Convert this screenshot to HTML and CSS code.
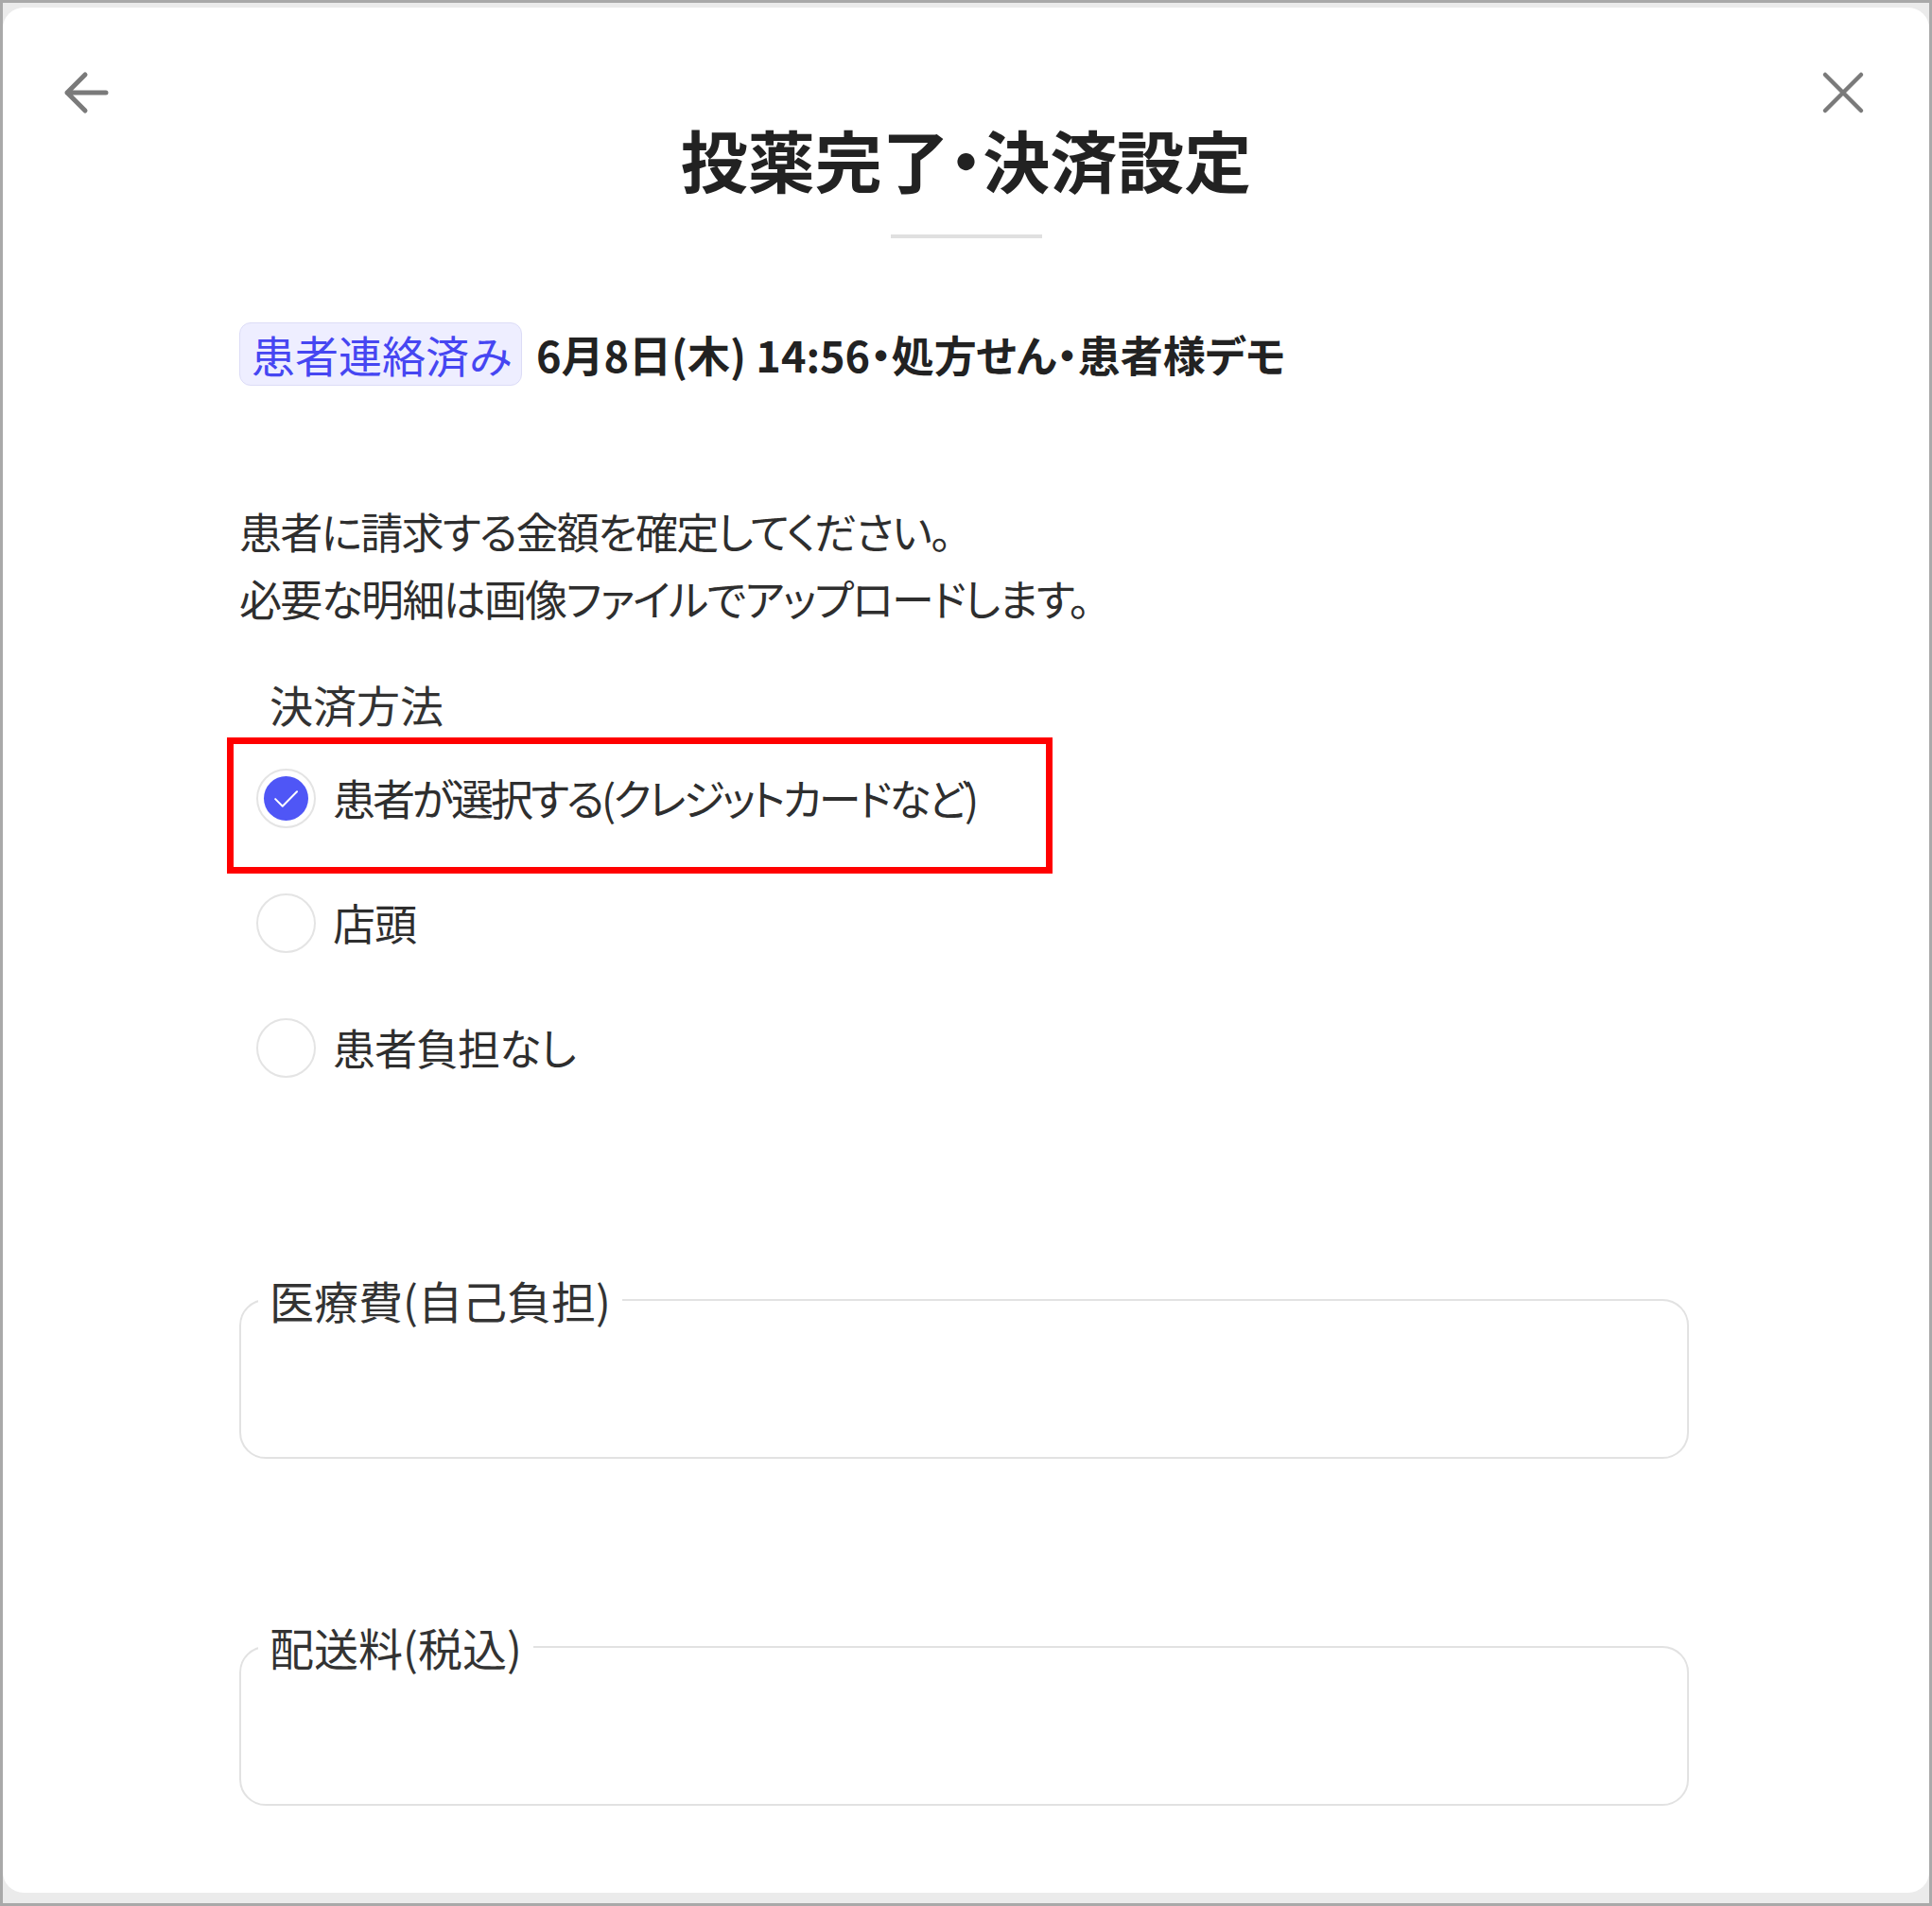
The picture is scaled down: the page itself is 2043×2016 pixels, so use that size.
FILE: index.html
```html
<!DOCTYPE html>
<html lang="ja">
<head>
<meta charset="utf-8">
<title>投薬完了・決済設定</title>
<link rel="stylesheet" href="styles.css">
</head>
<body>
<div class="card">
  <div class="topbar">
    <button class="icon-btn" aria-label="戻る">
      <svg width="48" height="48" viewBox="0 0 48 48"><path d="M45 24 H4 M23 5 L4 24 L23 43" fill="none" stroke="#7a7a7a" stroke-width="5" stroke-linecap="round" stroke-linejoin="round"/></svg>
    </button>
    <button class="icon-btn" aria-label="閉じる">
      <svg width="48" height="48" viewBox="0 0 48 48"><path d="M5 5 L43 43 M43 5 L5 43" fill="none" stroke="#7a7a7a" stroke-width="4.5" stroke-linecap="round"/></svg>
    </button>
  </div>
  <h1 class="title">投薬完了・決済設定</h1>
  <div class="title-rule"></div>
  <div class="content">
    <div class="meta">
      <span class="badge">患者連絡済み</span>
      <span class="meta-text">6月8日(木) 14:56・処方せん・患者様デモ</span>
    </div>
    <p class="desc">患者に請求する金額を確定してください。<br>必要な明細は画像ファイルでアップロードします。</p>
    <div class="group-label">決済方法</div>
    <div class="options">
      <label class="option option-highlight">
        <span class="radio checked"><span class="radio-dot"><svg width="47" height="47" viewBox="0 0 24 24"><path d="M6.2 12.3 L10.1 16.2 L17.9 8.3" fill="none" stroke="#fff" stroke-width="1" stroke-linecap="round" stroke-linejoin="round"/></svg></span></span>
        <span class="option-text option-text-long">患者が選択する(クレジットカードなど)</span>
      </label>
      <label class="option">
        <span class="radio"></span>
        <span class="option-text">店頭</span>
      </label>
      <label class="option">
        <span class="radio"></span>
        <span class="option-text">患者負担なし</span>
      </label>
    </div>
    <fieldset class="field field-first">
      <legend>医療費(自己負担)</legend>
      <div class="field-body"></div>
    </fieldset>
    <fieldset class="field field-second">
      <legend>配送料(税込)</legend>
      <div class="field-body"></div>
    </fieldset>
  </div>
</div>
</body>
</html>
```
FILE: styles.css
```css
html, body {
  margin: 0;
  padding: 0;
}

body {
  width: 2043px;
  height: 2016px;
  box-sizing: border-box;
  border: 3px solid #a9a9a9;
  background: #ebebeb;
  padding: 5px 0 11px;
  font-family: "Noto Sans CJK JP", "Noto Sans", sans-serif;
  color: #2a2a2a;
  overflow: hidden;
}

.card {
  height: 100%;
  background: #fff;
  border-radius: 22px;
}

.topbar {
  display: flex;
  justify-content: space-between;
  align-items: center;
  padding: 66px 67px 0 64px;
}

.icon-btn {
  display: block;
  width: 48px;
  height: 48px;
  padding: 0;
  border: 0;
  background: none;
}

.icon-btn svg {
  display: block;
}

.title {
  margin: 5px 0 0;
  font-size: 71px;
  line-height: 80px;
  font-weight: 700;
  text-align: center;
  color: #222;
  font-feature-settings: "palt" 1;
}

.title-rule {
  width: 160px;
  height: 4px;
  margin: 41px auto 0;
  background: #e0e0e0;
}

.content {
  width: 1533px;
  margin: 89px 0 0 250px;
}

.meta {
  display: flex;
  align-items: center;
  gap: 15px;
}

.badge {
  font-size: 46px;
  line-height: 57px;
  padding: 4px 9px 4px 12px;
  border: 1px solid #dcdcf7;
  border-radius: 12px;
  background: #eeeeff;
  color: #4646f2;
}

.meta-text {
  font-size: 45px;
  line-height: 57px;
  font-weight: 700;
  color: #222;
  font-feature-settings: "palt" 1;
}

.desc {
  margin: 118px 0 0;
  font-size: 45px;
  line-height: 71px;
  letter-spacing: -1.7px;
  color: #2e2e2e;
  font-feature-settings: "palt" 1;
}

.group-label {
  margin-top: 46px;
  padding-left: 32px;
  font-size: 46px;
  line-height: 60px;
  color: #333;
  font-feature-settings: "palt" 1;
}

.options {
  margin-top: 4px;
}

.option {
  position: relative;
  display: flex;
  align-items: center;
  gap: 18px;
  height: 132px;
  padding-left: 18px;
}

.option-highlight::after {
  content: "";
  position: absolute;
  left: -13px;
  top: 2px;
  width: 873px;
  height: 144px;
  box-sizing: border-box;
  border: 7px solid #ff0000;
  pointer-events: none;
}

.radio {
  display: flex;
  align-items: center;
  justify-content: center;
  width: 63px;
  height: 63px;
  box-sizing: border-box;
  border: 2px solid #e4e4e4;
  border-radius: 50%;
  background: #fff;
  flex: none;
}

.radio-dot {
  display: block;
  width: 47px;
  height: 47px;
  border-radius: 50%;
  background: #4f56f6;
}

.radio-dot svg {
  display: block;
}

.option-text {
  font-size: 45px;
  line-height: 60px;
  letter-spacing: -1px;
  color: #2e2e2e;
  font-feature-settings: "palt" 1;
}

.option-text-long {
  letter-spacing: -3px;
}

.field {
  margin: 0;
  padding: 0;
  min-width: 0;
  border: 2px solid #e2e2e2;
  border-radius: 28px;
}

.field-first {
  margin-top: 171px;
}

.field-second {
  margin-top: 169px;
}

.field legend {
  margin-left: 18px;
  padding: 0 12px;
  font-size: 47px;
  line-height: 60px;
  color: #333;
  font-feature-settings: "palt" 1;
}

.field-body {
  height: 136px;
}
```
